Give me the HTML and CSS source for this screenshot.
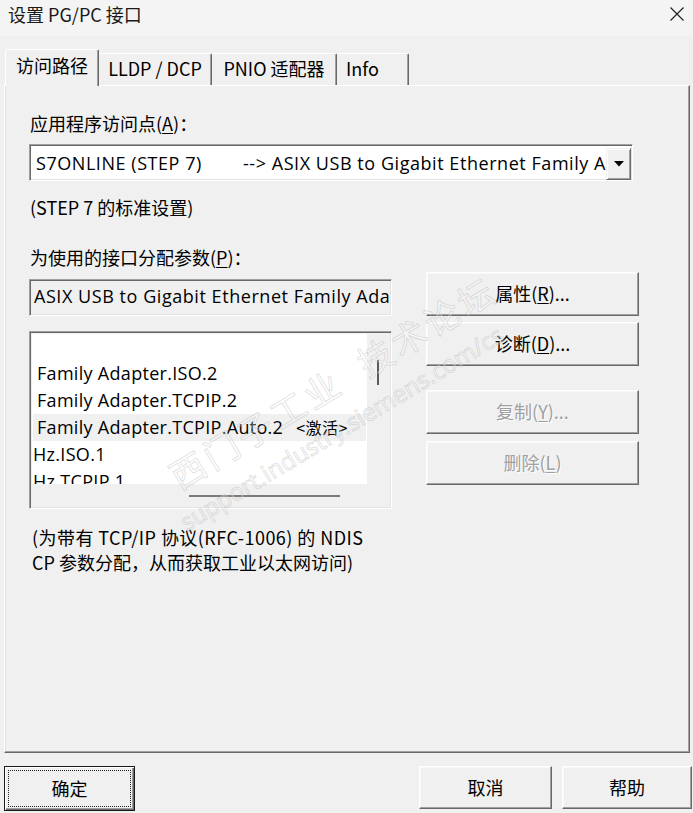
FILE: index.html
```html
<!DOCTYPE html>
<html lang="zh-CN">
<head>
<meta charset="utf-8">
<title>设置 PG/PC 接口</title>
<link rel="stylesheet" href="styles.css">
</head>
<body>
<div class="window">
  <header class="titlebar">
    <span class="title">设置 PG/PC 接口</span>
    <svg class="close" width="16" height="16" viewBox="0 0 16 16"><path d="M1.5 1.5L14.5 14.5M14.5 1.5L1.5 14.5" stroke="#1b1b1b" stroke-width="1.1" fill="none"/></svg>
  </header>
  <div class="content">
    <div class="tabs">
      <div class="tab tab-access active">访问路径</div>
      <div class="tab tab-lldp">LLDP / DCP</div>
      <div class="tab tab-pnio">PNIO 适配器</div>
      <div class="tab tab-info">Info</div>
    </div>
    <div class="panel">
      <div class="label label-ap">应用程序访问点(<u>A</u>)：</div>
      <div class="combo sunken">
        <div class="combo-text"><span class="combo-ap">S7ONLINE (STEP 7)</span><span>--&gt; ASIX USB to Gigabit Ethernet Family Adapter.TCPIP.Auto.2</span></div>
        <div class="combo-btn"><svg width="10" height="6" viewBox="0 0 10 6"><path d="M0 0H10L5 5.5Z" fill="#000"/></svg></div>
      </div>
      <div class="label label-std">(STEP 7 的标准设置)</div>
      <div class="label label-params">为使用的接口分配参数(<u>P</u>)：</div>
      <div class="row">
        <div class="leftcol">
          <div class="field sunken">ASIX USB to Gigabit Ethernet Family Adapter</div>
          <div class="listbox sunken">
            <div class="list-items">
              <div class="item">Family Adapter.ISO.2</div>
              <div class="item">Family Adapter.TCPIP.2</div>
              <div class="item selected">Family Adapter.TCPIP.Auto.2<span class="active-tag">&lt;激活&gt;</span></div>
              <div class="item shifted">Hz.ISO.1</div>
              <div class="item shifted">Hz.TCPIP.1</div>
            </div>
            <div class="vstrip"><div class="vthumb"></div></div>
            <div class="hstrip"><div class="hthumb"></div></div>
          </div>
        </div>
        <div class="rightcol">
          <button class="btn btn-props">属性(<u>R</u>)...</button>
          <button class="btn btn-diag">诊断(<u>D</u>)...</button>
          <button class="btn btn-copy disabled">复制(<u>Y</u>)...</button>
          <button class="btn btn-del disabled">删除(<u>L</u>)</button>
        </div>
      </div>
      <div class="desc"><div class="desc-1">(为带有 TCP/IP 协议(RFC-1006) 的 NDIS</div><div>CP 参数分配，从而获取工业以太网访问)</div></div>
    </div>
    <div class="footer">
      <button class="btn btn-ok">确定</button>
      <button class="btn btn-cancel">取消</button>
      <button class="btn btn-help">帮助</button>
    </div>
  </div>
  <div class="watermark">
    <div class="wm-cn">西门子工业&nbsp;&nbsp;技术论坛</div>
    <div class="wm-url">support.industry.siemens.com/cs</div>
  </div>
</div>
</body>
</html>
```

FILE: styles.css
```css
* { box-sizing: border-box; }
html, body { margin: 0; padding: 0; }
body {
  background: #f0f0f0;
  font-family: "Noto Sans CJK SC", "Noto Sans", sans-serif;
  font-size: 18px;
  color: #000;
}
.window {
  position: relative;
  width: 693px;
  height: 813px;
  overflow: hidden;
  background: #f0f0f0;
}
.titlebar {
  height: 36px;
  background: #f4f4f4;
  display: flex;
  align-items: center;
  justify-content: space-between;
  padding: 0 8px 9px 8px;
}
.title {
  font-size: 18px;
  line-height: 20px;
  color: #1a1a1a;
}

.content {
  padding: 0 3px 0 4px;
}

/* tabs */
.tabs {
  margin-top: 13px;
  height: 37px;
  display: flex;
  align-items: flex-end;
  padding-left: 1px;
  margin-bottom: -1px;
  position: relative;
  z-index: 2;
}
.tab {
  height: 32px;
  margin-bottom: 1px;
  display: flex;
  align-items: center;
  justify-content: center;
  background: #f0f0f0;
  border-top: 1px solid #fff;
  border-left: 1px solid #fff;
  border-right: 1px solid #696969;
  box-shadow: inset -1px 0 #a0a0a0;
  border-radius: 2px 2px 0 0;
  line-height: 20px;
  padding-bottom: 4px;
  white-space: nowrap;
}
.tab.active {
  height: 37px;
  margin-bottom: 0;
  padding-bottom: 6px;
}
.tab-access { width: 94px; }
.tab-lldp { width: 113px; border-left: none; }
.tab-pnio { width: 125px; border-left: none; }
.tab-info { width: 72px; border-left: none; justify-content: flex-start; padding-left: 9px; }

/* panel */
.panel {
  height: 668px;
  border-top: 1px solid #fff;
  border-left: 1px solid #fff;
  border-right: 1px solid #696969;
  border-bottom: 1px solid #696969;
  box-shadow: inset -1px -1px #a0a0a0, inset 1px 0 #e3e3e3;
  padding-left: 24px;
}
.label {
  line-height: 20px;
  padding-left: 1px;
  white-space: nowrap;
}
.label u, .btn u { text-underline-offset: 2px; }
.label-ap { margin-top: 27px; }
.label-std { margin-top: 16px; }
.label-params { margin-top: 30px; }

.sunken {
  border-top: 1px solid #a0a0a0;
  border-left: 1px solid #a0a0a0;
  border-right: 1px solid #fff;
  border-bottom: 1px solid #fff;
  box-shadow: inset 1px 1px #696969, inset -1px -1px #e3e3e3;
}

.combo {
  margin-top: 11px;
  width: 604px;
  height: 37px;
  background: #fff;
  display: flex;
  align-items: stretch;
  padding: 2px 1px 2px 2px;
}
.combo-text {
  flex: 1;
  overflow: hidden;
  white-space: nowrap;
  font-family: "Open Sans", "Noto Sans CJK SC", sans-serif;
  letter-spacing: 0.55px;
  line-height: 33px;
  padding-left: 4px;
  color: #000;
}
.combo-ap {
  display: inline-block;
  width: 207px;
}
.combo-btn {
  width: 25px;
  margin: 1px 0 0 0;
  height: 32px;
  background: #f0f0f0;
  border-top: 1px solid #f0f0f0;
  border-left: 1px solid #f0f0f0;
  border-right: 1px solid #696969;
  border-bottom: 1px solid #696969;
  box-shadow: inset 1px 1px #fff, inset -1px -1px #a0a0a0;
  display: flex;
  align-items: center;
  justify-content: center;
}

.row {
  display: flex;
  align-items: flex-start;
}
.leftcol { width: 363px; }
.field {
  margin-top: 12px;
  height: 37px;
  background: #f0f0f0;
  font-family: "Open Sans", "Noto Sans CJK SC", sans-serif;
  letter-spacing: 0.55px;
  line-height: 33px;
  padding-left: 4px;
  white-space: nowrap;
  overflow: hidden;
}
.listbox {
  margin-top: 15px;
  height: 178px;
  background: #f0f0f0;
  padding: 2px;
  display: grid;
  grid-template-columns: 335px 1fr;
  grid-template-rows: 150px 1fr;
}
.list-items {
  background: #fff;
  overflow: hidden;
  padding-top: 26px;
  font-family: "Open Sans", "Noto Sans CJK SC", sans-serif;
  letter-spacing: 0.3px;
}
.item {
  height: 27px;
  line-height: 27px;
  padding-left: 5px;
  white-space: nowrap;
}
.item.shifted { padding-left: 1px; }
.item.selected {
  background: #f0f0f0;
  margin: 0 1px;
  padding-left: 4px;
}
.active-tag {
  font-family: "Noto Sans CJK SC", sans-serif;
  font-size: 16px;
  letter-spacing: 0.5px;
  margin-left: 13px;
}
.vstrip { padding: 26px 0 0 10px; }
.vthumb { width: 2px; height: 25px; background: #5a5a5a; }
.hstrip { grid-column: 1 / span 2; padding: 11px 0 0 157px; }
.hthumb { width: 151px; height: 2px; background: #7a7a7a; }

.rightcol {
  width: 213px;
  margin-left: 34px;
  display: flex;
  flex-direction: column;
}

.btn {
  font-family: "Noto Sans CJK SC", sans-serif;
  font-size: 18px;
  color: #000;
  background: #f0f0f0;
  border-top: 1px solid #fff;
  border-left: 1px solid #fff;
  border-right: 1px solid #696969;
  border-bottom: 1px solid #696969;
  box-shadow: inset -1px -1px #a0a0a0, inset 1px 1px #f8f8f8;
  padding: 0 0 2px 0;
  height: 44px;
  line-height: 20px;
}
.btn.disabled {
  color: #a0a0a0;
  text-shadow: 1px 1px #fff;
}
.btn-props { margin-top: 5px; }
.btn-diag { margin-top: 6px; }
.btn-copy { margin-top: 24px; }
.btn-del { margin-top: 7px; }

.desc {
  margin-top: 16px;
  line-height: 25px;
  padding-left: 3px;
  white-space: nowrap;
}
.desc-1 { letter-spacing: 0.45px; }

.footer {
  margin-top: 13px;
  margin-right: -2px;
  display: flex;
  align-items: flex-start;
}
.btn-ok {
  width: 131px;
  height: 45px;
  border: 1px solid #1a1a1a;
  box-shadow: inset 1px 1px #fff, inset -1px -1px #696969, inset -2px -2px #a0a0a0;
  outline: 1px dotted #222;
  outline-offset: -5px;
}
.btn-cancel { width: 133px; height: 43px; margin-left: auto; }
.btn-help { width: 130px; height: 43px; margin-left: 10px; }

/* watermark overlay */
.watermark {
  position: absolute;
  left: 0;
  top: 0;
  width: 693px;
  height: 813px;
  pointer-events: none;
  z-index: 5;
}
.wm-cn, .wm-url {
  position: absolute;
  white-space: nowrap;
  transform-origin: 0 50%;
  transform: rotate(-31deg);
  color: rgba(255, 255, 255, 0.3);
  -webkit-text-stroke: 0.8px rgba(170, 170, 170, 0.4);
}
.wm-cn {
  left: 172px;
  top: 458px;
  font-family: "Noto Sans CJK SC", sans-serif;
  font-size: 35px;
  letter-spacing: 4px;
  line-height: 40px;
}
.wm-url {
  left: 182px;
  top: 510px;
  font-family: "Open Sans", sans-serif;
  font-size: 24px;
  line-height: 28px;
}
```
